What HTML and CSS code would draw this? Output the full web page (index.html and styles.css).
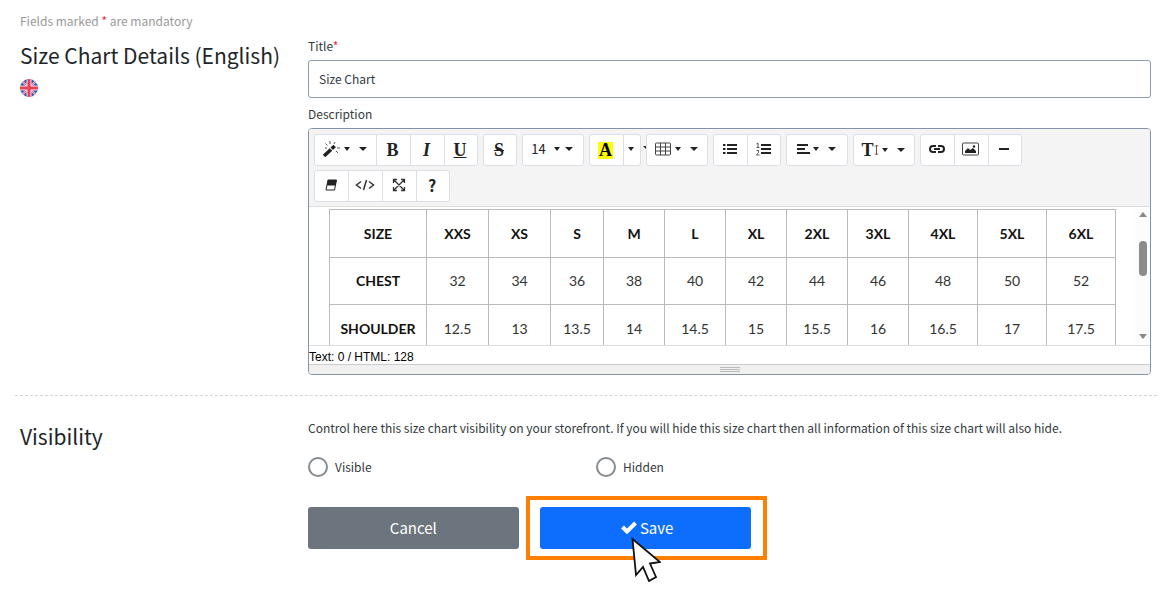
FILE: index.html
```html
<!DOCTYPE html>
<html lang="en">
<head>
    <meta charset="UTF-8">
    <meta name="viewport" content="width=device-width, initial-scale=1.0">
    <title>Size Chart</title>
    <link rel="stylesheet" href="styles.css">
</head>
<body>
    <form class="page">
        <section class="row details">
            <div class="side">
                <p class="note">Fields marked <span class="required">*</span> are mandatory</p>
                <h2>Size Chart Details (English)</h2>
                <svg class="flag" viewBox="0 0 18 18" role="img" aria-label="English">
                    <clipPath id="round"><circle cx="9" cy="9" r="9"/></clipPath>
                    <g clip-path="url(#round)">
                        <rect width="18" height="18" fill="#3f55a5"/>
                        <path d="M1 1l16 16M17 1L1 17" stroke="#d9d6ea" stroke-width="2"/>
                        <path d="M1 1l16 16M17 1L1 17" stroke="#ee6478" stroke-width="1"/>
                        <path d="M9 0v18M0 9h18" stroke="#f3e4ee" stroke-width="5"/>
                        <path d="M9 0v18M0 9h18" stroke="#ee4058" stroke-width="3"/>
                    </g>
                </svg>
            </div>
            <div class="content">
                <label for="title">Title<span class="required">*</span></label>
                <input type="text" class="text-input" id="title" name="title" value="Size Chart" required>
                <span class="label" id="description-label">Description</span>
                <div class="editor">
                    <div class="toolbar">
                        <div class="group">
                            <button type="button" class="drop" aria-label="Style">
                                <svg width="18" height="18" viewBox="0 0 18 18"><path d="M1 16l7-6.500" stroke="#222" stroke-width="3.600"/><path d="M8.700 8.800l3-2.800" stroke="#222" stroke-width="3.600"/><path d="M2.500 3.500l2 2M7 1v3M12 2l-1 2M14 8h3M13 11l2 2M2 8h2" stroke="#555"/></svg>
                                <i class="caret"></i><i class="caret wide"></i>
                            </button>
                            <button type="button" class="serif" aria-label="Bold">B</button>
                            <button type="button" class="serif italic" aria-label="Italic">I</button>
                            <button type="button" class="serif underline" aria-label="Underline">U</button>
                        </div>
                        <div class="group">
                            <button type="button" class="serif strike" aria-label="Strikethrough">S</button>
                        </div>
                        <div class="group">
                            <button type="button" class="drop size" aria-label="Font size">14 <i class="caret"></i><i class="caret wide"></i></button>
                        </div>
                        <div class="group">
                            <button type="button" class="serif" aria-label="Recent color"><span class="marker">A</span></button>
                            <button type="button" class="more" aria-label="More colors"><i class="caret"></i></button>
                            <i class="caret wide spill"></i>
                        </div>
                        <div class="group">
                            <button type="button" class="drop" aria-label="Table">
                                <svg width="17" height="14" viewBox="0 0 17 14" fill="none" stroke="#444"><rect x=".5" y="1" width="15" height="12" rx="1"/><path d="M.5 5h15M.5 9h15M5.500 1v12M10.500 1v12"/></svg>
                                <i class="caret"></i><i class="caret wide"></i>
                            </button>
                        </div>
                        <div class="group">
                            <button type="button" aria-label="Unordered list">
                                <svg width="14" height="14" viewBox="0 0 14 14"><path d="M0 3h2.500M0 7h2.500M0 11h2.500M4 3h10M4 7h10M4 11h10" stroke="#222" stroke-width="2"/></svg>
                            </button>
                            <button type="button" aria-label="Ordered list">
                                <svg width="15" height="14" viewBox="0 0 15 14" fill="none"><path d="M5 3h10M5 7h10M5 11h10" stroke="#222" stroke-width="2"/><path d="M.5 2l1.500-1v4M.5 5.500h3M.5 8.500h2v2L.5 13h3" stroke="#555"/></svg>
                            </button>
                        </div>
                        <div class="group">
                            <button type="button" class="drop" aria-label="Paragraph">
                                <svg width="14" height="14" viewBox="0 0 14 14"><path d="M1 3h11M1 7h8M1 11h13" stroke="#222" stroke-width="2"/></svg>
                                <i class="caret"></i><i class="caret wide"></i>
                            </button>
                        </div>
                        <div class="group">
                            <button type="button" class="drop serif" aria-label="Line height">
                                <span>T</span><svg width="5" height="14" viewBox="0 0 5 14" fill="none" stroke="#654"><path d="M2.500 2v10M1 3.500L2.500 2 4 3.500M1 10.500L2.500 12 4 10.500"/></svg>
                                <i class="caret"></i><i class="caret wide"></i>
                            </button>
                        </div>
                        <div class="group">
                            <button type="button" aria-label="Link">
                                <svg width="16" height="12" viewBox="0 0 16 12" fill="none" stroke="#222" stroke-width="2"><path d="M7 9H4a3 3 0 0 1 0-6h3M9 3h3a3 3 0 0 1 0 6H9M5 6h6"/></svg>
                            </button>
                            <button type="button" aria-label="Picture">
                                <svg width="17" height="14" viewBox="0 0 17 14"><rect x=".5" y="1" width="16" height="12" rx="1" fill="none" stroke="#444"/><path d="M3 11V9l3-3 2 2 3-2 3 3v2z" fill="#222"/><circle cx="12" cy="4.500" r="1.200" fill="#222"/></svg>
                            </button>
                            <button type="button" aria-label="Horizontal rule">
                                <svg width="12" height="12" viewBox="0 0 12 12"><path d="M1 6h10" stroke="#222" stroke-width="2"/></svg>
                            </button>
                        </div>
                        <div class="group">
                            <button type="button" aria-label="Remove format">
                                <svg width="14" height="14" viewBox="0 0 14 14"><path d="M4 2h8.500l-2 10H2z" fill="none" stroke="#222"/><path d="M4 2h8.500L11.500 7.500H3z" fill="#222"/></svg>
                            </button>
                            <button type="button" aria-label="Code view">
                                <svg width="20" height="12" viewBox="0 0 20 12" fill="none" stroke="#333" stroke-width="1.500"><path d="M6 2.500L1.500 6 6 9.500M14 2.500L18.500 6 14 9.500M11.500 1l-3 10"/></svg>
                            </button>
                            <button type="button" aria-label="Full screen">
                                <svg width="14" height="14" viewBox="0 0 14 14" fill="none" stroke="#333" stroke-width="1.300"><path d="M2 2l10 10M12 2L2 12M1.500 5V1.500H5M9 1.500h3.500V5M1.500 9v3.500H5M9 12.500h3.500V9"/></svg>
                            </button>
                            <button type="button" class="help" aria-label="Help">?</button>
                        </div>
                    </div>
                    <div class="edit-area" aria-labelledby="description-label">
                        <table class="size-table">
                            <colgroup>
                                <col class="col-name"><col class="col-m"><col class="col-m"><col class="col-s">
                                <col class="col-n"><col class="col-n"><col class="col-n"><col class="col-n"><col class="col-n">
                                <col class="col-l"><col class="col-l"><col class="col-l">
                            </colgroup>
                            <tr><th>SIZE</th><th>XXS</th><th>XS</th><th>S</th><th>M</th><th>L</th><th>XL</th><th>2XL</th><th>3XL</th><th>4XL</th><th>5XL</th><th>6XL</th></tr>
                            <tr><th>CHEST</th><td>32</td><td>34</td><td>36</td><td>38</td><td>40</td><td>42</td><td>44</td><td>46</td><td>48</td><td>50</td><td>52</td></tr>
                            <tr><th>SHOULDER</th><td>12.5</td><td>13</td><td>13.5</td><td>14</td><td>14.5</td><td>15</td><td>15.5</td><td>16</td><td>16.5</td><td>17</td><td>17.5</td></tr>
                        </table>
                        <div class="scrollbar">
                            <i class="arrow up"></i>
                            <i class="thumb"></i>
                            <i class="arrow down"></i>
                        </div>
                    </div>
                    <div class="status">Text: 0 / HTML: 128</div>
                    <div class="resize"><i class="grip"></i></div>
                </div>
            </div>
        </section>

        <section class="row visibility">
            <div class="side">
                <h2>Visibility</h2>
            </div>
            <div class="content">
                <p>Control here this size chart visibility on your storefront. If you will hide this size chart then all information of this size chart will also hide.</p>
                <div class="radios">
                    <label><input type="radio" name="visibility" value="visible">Visible</label>
                    <label><input type="radio" name="visibility" value="hidden">Hidden</label>
                </div>
                <div class="actions">
                    <button type="button" class="btn cancel">Cancel</button>
                    <div class="save-box">
                        <button type="submit" class="btn save">
                            <svg width="16" height="14" viewBox="0 0 16 14"><path d="M1.500 7l4.500 4.500L14.500 3" fill="none" stroke="#fff" stroke-width="4"/></svg>
                            Save
                        </button>
                        <svg class="pointer" viewBox="0 0 30 45"><path d="M1.500 2L5 38l7-8 6 14 7-4-6-13.500L29 25z" fill="#fff" stroke="#111" stroke-width="1.800"/></svg>
                    </div>
                </div>
            </div>
        </section>
    </form>
</body>
</html>
```

FILE: styles.css
```css
* {
    box-sizing: border-box;
}

body {
    margin: 0;
    background-color: #fff;
    color: #343a40;
    font-family: "Noto Sans CJK SC", "Open Sans", sans-serif;
    font-size: 12px;
    line-height: 20px;
}

h2 {
    margin: 0;
    color: #212529;
    font-size: 21px;
    font-weight: 400;
    line-height: 30px;
}

p {
    margin: 0;
}

button {
    font-family: inherit;
    cursor: pointer;
}

.page {
    padding: 0 11px 50px 15px;
}

.row {
    display: grid;
    grid-template-columns: 288px 1fr;
    padding: 0 6px 0 5px;
}

.details {
    padding-bottom: 20px;
    border-bottom: 1px dashed #d5d5d5;
}

.details .side {
    padding-top: 11px;
}

.details .content {
    padding-top: 36px;
}

.note {
    margin-bottom: 9px;
    color: #999;
}

.required {
    color: #e8303a;
}

.flag {
    display: block;
    width: 18px;
    height: 18px;
    margin-top: 9px;
}

label, .label {
    display: block;
}

.text-input {
    display: block;
    width: 100%;
    height: 38px;
    margin: 4px 0 6px;
    padding: 0 10px 2px;
    border: 1px solid #8c9cab;
    border-radius: 3px;
    color: #343a40;
    font-family: inherit;
    font-size: 12px;
}

/* Editor */
.editor {
    margin-top: 4px;
    border: 1px solid #8193a5;
    border-radius: 4px;
    overflow: hidden;
}

.toolbar {
    display: flex;
    flex-wrap: wrap;
    gap: 4px 5px;
    padding: 5px 5px 4px;
    background-color: #f4f4f4;
    border-bottom: 1px solid #ddd;
}

.group {
    position: relative;
    display: flex;
    border: 1px solid #dae0e5;
    border-radius: 3px;
    background-color: #fff;
}

.group button {
    display: flex;
    align-items: center;
    justify-content: center;
    width: 34px;
    height: 30px;
    padding: 0 2px 2px 0;
    border: 0;
    border-right: 1px solid #dae0e5;
    background: none;
    color: #222;
    font-size: 13px;
    line-height: 20px;
}

.group button:last-of-type {
    width: 32px;
    border-right: 0;
}

.group button.drop {
    width: 62px;
}

.group button.drop:last-of-type {
    width: 60px;
}

.group button.serif {
    padding-bottom: 0;
    font-family: "Liberation Serif", serif;
    font-size: 18px;
    font-weight: 700;
}

.group .italic {
    font-style: italic;
}

.group .underline {
    text-decoration: underline;
}

.group .strike {
    text-decoration: line-through;
}

.group button.help {
    font-size: 16px;
    font-weight: 700;
}

.group button.more:last-of-type {
    width: 16px;
}

.marker {
    padding: 0 1px;
    background-color: #ff0;
    color: #000;
    line-height: 17px;
}

.caret {
    margin-left: 3px;
    border: 3px solid transparent;
    border-top: 4px solid #222;
    border-bottom: 0;
}

.more .caret {
    margin-left: 0;
}

.caret.wide {
    margin-left: 9px;
    border-width: 4px 4px 0;
}

.size .caret {
    margin-left: 8px;
}

.size .caret.wide {
    margin-left: 5px;
}

/* second caret of the color group runs under the next group */
.spill {
    position: absolute;
    top: 11px;
    right: -11px;
}

.edit-area {
    display: flex;
    justify-content: space-between;
    height: 139px;
    padding: 2px 0 0 20px;
    overflow: hidden;
    border-bottom: 1px solid #ddd;
}

.size-table {
    flex: 0 1 787px;
    height: 144px;
    border-collapse: collapse;
    table-layout: fixed;
    color: #333;
    font-family: Lato, sans-serif;
    font-size: 14px;
}

.size-table th,
.size-table td {
    height: 47px;
    padding: 1px 0 0;
    border: 1px solid #bbb;
    text-align: center;
}

.size-table th {
    color: #111;
}

.col-name { width: 97px; }
.col-s { width: 53px; }
.col-m { width: 62px; }
.col-n { width: 61px; }
.col-l { width: 69px; }

.scrollbar {
    display: flex;
    flex-direction: column;
    align-items: center;
    width: 15px;
    height: 133px;
    padding: 3px 0;
    background-color: #fcfcfc;
}

.arrow {
    border: 4px solid transparent;
}

.up {
    border-top: 0;
    border-bottom: 5px solid #888;
}

.down {
    margin-top: auto;
    border-top: 5px solid #888;
    border-bottom: 0;
}

.thumb {
    width: 8px;
    height: 35px;
    margin-top: 24px;
    border-radius: 4px;
    background-color: #8b8b8b;
}

.status {
    height: 18px;
    color: #000;
    font-family: "Liberation Sans", Arial, sans-serif;
    font-size: 12px;
    line-height: 22px;
}

.resize {
    display: flex;
    justify-content: center;
    height: 10px;
    padding-top: 2px;
    background-color: #f0f0f0;
    border-top: 1px solid #ccc;
}

.grip {
    width: 20px;
    height: 5px;
    border: 1px solid #bbb;
    border-width: 1px 0;
    background: linear-gradient(#f0f0f0 1px, #bbb 1px, #bbb 2px, #f0f0f0 2px);
}

/* Visibility */
.visibility .side {
    padding-top: 25px;
}

.visibility .content {
    padding-top: 22px;
}

.radios {
    display: grid;
    grid-template-columns: repeat(3, 1fr);
    gap: 21px;
    margin: 19px 0 30px;
}

.radios label {
    display: flex;
    align-items: center;
    gap: 7px;
}

.radios input {
    appearance: none;
    width: 20px;
    height: 20px;
    margin: 0;
    border: 2px solid #868b90;
    border-radius: 50%;
}

.radios input:checked {
    border-width: 6px;
    border-color: #0d6efd;
}

.actions {
    display: grid;
    grid-template-columns: 25% 25%;
    gap: 21px;
}

.btn {
    display: flex;
    align-items: center;
    justify-content: center;
    gap: 3px;
    width: 100%;
    height: 42px;
    padding: 0 0 2px;
    border: 0;
    border-radius: 3px;
    color: #fff;
    font-size: 15px;
}

.cancel {
    background-color: #6c757d;
}

.save {
    background-color: #0d6efd;
}

.save-box {
    position: relative;
}

/* highlight frame round the save button */
.save-box::before {
    content: "";
    position: absolute;
    inset: -11px -16px -11px -14px;
    border: 4px solid #ff8000;
}

.save-box .btn {
    position: relative;
    padding-left: 4px;
}

.pointer {
    position: absolute;
    top: 30px;
    left: 91px;
    width: 30px;
    height: 45px;
}
```
